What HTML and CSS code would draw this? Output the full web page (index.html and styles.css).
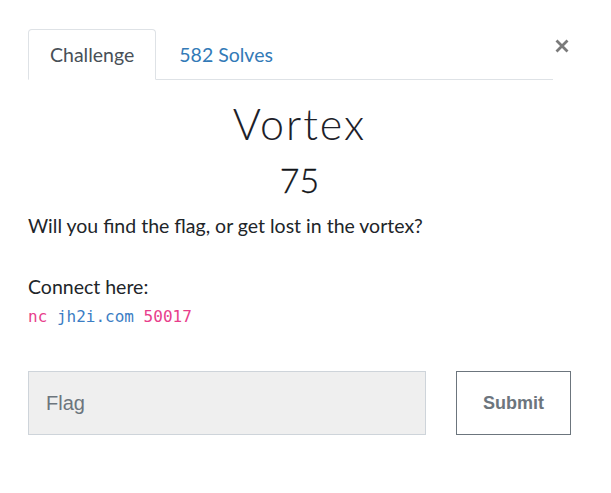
FILE: index.html
```html
<!DOCTYPE html>
<html>
<head>
<meta charset="utf-8">
<link rel="stylesheet" href="styles.css">
</head>
<body>
<div class="modal">
  <div class="header">
    <ul class="tabs">
      <li class="tab active">Challenge</li>
      <li class="tab link">582 Solves</li>
    </ul>
    <button class="close" aria-label="Close">
      <svg width="14" height="14" viewBox="0 0 14 14"><path d="M1.5 1.5 L12.5 12.5 M12.5 1.5 L1.5 12.5" stroke="#7a7a7a" stroke-width="2.8" stroke-linecap="butt"/></svg>
    </button>
  </div>
  <h3 class="name">Vortex</h3>
  <h4 class="value">75</h4>
  <p class="desc">Will you find the flag, or get lost in the vortex?</p>
  <p class="connect">Connect here:</p>
  <code class="cmd"><span class="pink">nc</span> <span class="blue">jh2i.com</span> <span class="pink">50017</span></code>
  <div class="submit-row">
    <input class="flag" type="text" placeholder="Flag">
    <button class="submit">Submit</button>
  </div>
</div>
</body>
</html>
```

FILE: styles.css
```css
html, body {
  margin: 0;
  padding: 0;
  background: #ffffff;
}

body {
  font-family: Lato, "Noto Sans", sans-serif;
  color: #212529;
}

.modal {
  padding: 29px 40px 0 28px;
}

.header {
  display: flex;
  align-items: flex-start;
}

.tabs {
  flex: 1;
  display: flex;
  list-style: none;
  margin: 0;
  padding: 0;
  border-bottom: 1px solid #dee2e6;
}

.tab {
  font-size: 19.5px;
  line-height: 26px;
  padding: 12px 21px 11px 21px;
  border: 1px solid transparent;
  border-top-left-radius: 4px;
  border-top-right-radius: 4px;
  margin-bottom: -1px;
}

.tab.active {
  color: #495057;
  border-color: #dee2e6 #dee2e6 #ffffff;
  background: #fff;
}

.tab.link {
  color: #337ab7;
  padding-left: 22px;
}

.close {
  background: none;
  border: 0;
  padding: 0;
  margin: 10px 1px 0 1px;
  width: 16px;
  height: 14px;
  display: flex;
  align-items: center;
  justify-content: center;
}

.name {
  margin: 19px 0 0 0;
  text-align: center;
  font-size: 43px;
  font-weight: 300;
  line-height: 50px;
  letter-spacing: 2px;
  color: #1d2129;
}

.value {
  margin: 10px 0 0 0;
  text-align: center;
  font-size: 34px;
  font-weight: 300;
  line-height: 41px;
  color: #111418;
  -webkit-text-stroke: 0.3px #111418;
}

.desc {
  margin: 12px 0 0 0;
  font-size: 19.5px;
  line-height: 28px;
}

.connect {
  margin: 33px 0 0 0;
  font-size: 19.5px;
  line-height: 28px;
}

.cmd {
  display: block;
  margin-top: 4px;
  font-family: "DejaVu Sans Mono", monospace;
  font-size: 16px;
  line-height: 24px;
}

.pink { color: #e83e8c; }
.blue { color: #3b7dc4; }

.submit-row {
  display: flex;
  gap: 30px;
  margin-top: 42px;
}

.flag {
  flex: 1;
  height: 64px;
  box-sizing: border-box;
  border: 1px solid #ced4da;
  background: #efefef;
  padding: 0 17px;
  font-family: "Liberation Sans", Arial, sans-serif;
  font-size: 20px;
  color: #495057;
  outline: none;
}

.flag::placeholder {
  color: #6c757d;
}

.submit {
  width: 115px;
  height: 64px;
  box-sizing: border-box;
  border: 1px solid #6c757d;
  background: #fff;
  color: #6c757d;
  font-family: "Liberation Sans", Arial, sans-serif;
  font-weight: 700;
  font-size: 18px;
  padding: 0;
}
```
